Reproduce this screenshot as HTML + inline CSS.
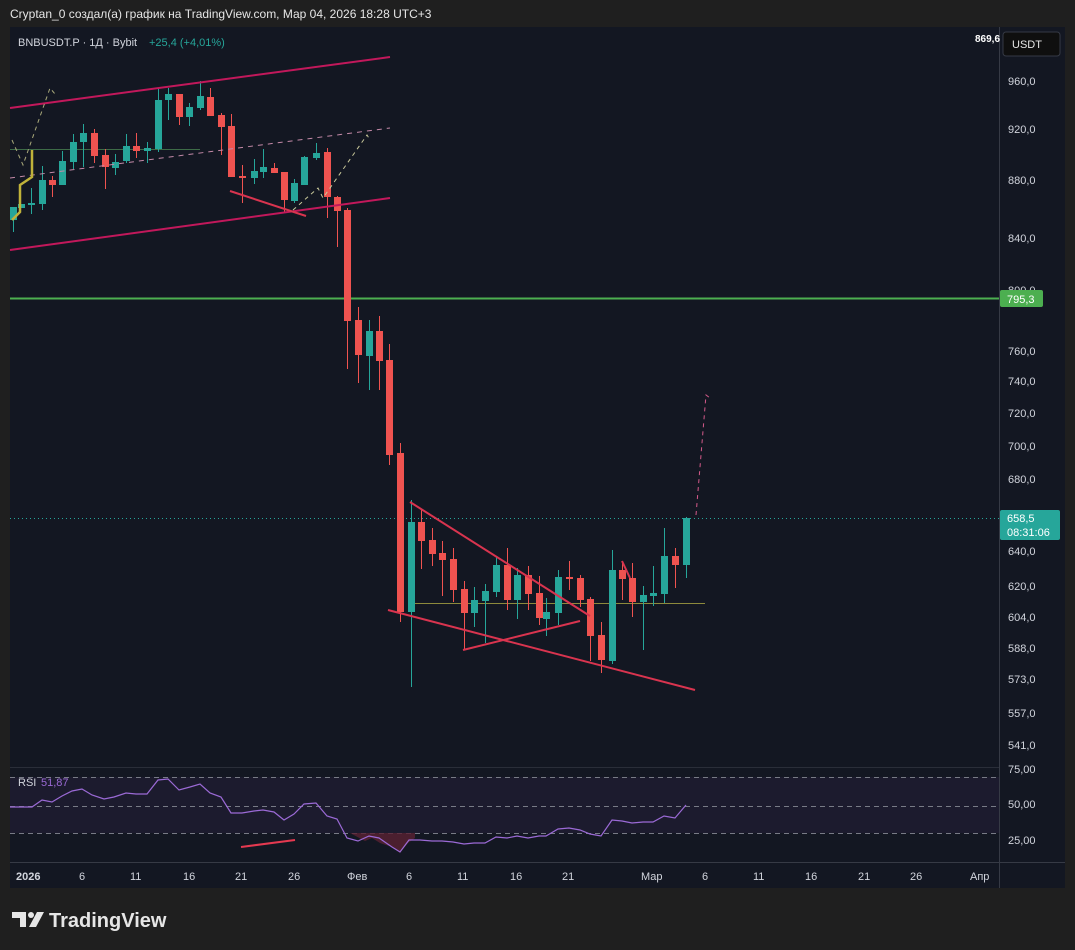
<!DOCTYPE html>
<html><head><meta charset="utf-8"><style>
html,body{margin:0;padding:0;background:#1f1f1f;width:1075px;height:950px;overflow:hidden;font-family:"Liberation Sans",sans-serif}
svg text{font-family:"Liberation Sans",sans-serif}
</style></head><body>
<svg id="s" width="1075" height="950" xmlns="http://www.w3.org/2000/svg">
<rect width="1075" height="950" fill="#1f1f1f"/>
<text x="10" y="18" fill="#e6e6e6" font-size="12">Cryptan_0 создал(а) график на TradingView.com, Мар 04, 2026 18:28 UTC+3</text>
<rect x="10" y="27" width="1055" height="861" fill="#131722"/>
<line x1="999.5" y1="27" x2="999.5" y2="888" stroke="#363a45"/>
<line x1="10" y1="767.5" x2="999" y2="767.5" stroke="#2a2e39"/>
<line x1="10" y1="862.5" x2="1065" y2="862.5" stroke="#363a45"/>
<!-- RSI pane -->
<rect x="10" y="777" width="989" height="56" fill="#1c1b2e"/>
<g stroke="#787b86" stroke-dasharray="5,4" stroke-width="1">
<line x1="10" y1="777.5" x2="999" y2="777.5"/><line x1="10" y1="806.5" x2="999" y2="806.5"/><line x1="10" y1="833.5" x2="999" y2="833.5"/></g>
<polygon points="350,833 365,841 372,838 380,843 392,847 400,853 408,843 415,838 415,833" fill="#5a2233" opacity="0.8"/>
<polyline fill="none" stroke="#9b6ad6" stroke-width="1.2" points="10,807 32,807 42,800 52,802 62,796 72,791 82,789 92,795 104,799 114,797 126,793 136,794 147,794 158,780 168,779 179,790 190,787 200,784 210,793 221,797 231,813 242,813 254,811 263,810 274,812 284,820 294,814 304,804 316,803 327,816 337,819 347,838 358,841 369,836 379,838 392,847 400,852 409,840 420,840 432,841 442,841 453,842 464,844 474,843 485,843 496,837 507,838 517,836 528,838 539,836 546,836 558,829 569,828 580,830 590,834 601,836 612,820 622,821 632,823 643,822 653,822 664,816 675,818 686,805"/>
<line x1="241" y1="847" x2="295" y2="840" stroke="#e53950" stroke-width="2"/>
<text x="18" y="786" fill="#d1d4dc" font-size="11">RSI</text><text x="41" y="786" fill="#9b6ad6" font-size="11">51,87</text>
<!-- axis labels -->
<g fill="#d1d4dc" font-size="11">
<text x="1008" y="85">960,0</text><text x="1008" y="133">920,0</text><text x="1008" y="184">880,0</text><text x="1008" y="242">840,0</text><text x="1008" y="294">800,0</text><text x="1008" y="355">760,0</text><text x="1008" y="385">740,0</text><text x="1008" y="417">720,0</text><text x="1008" y="450">700,0</text><text x="1008" y="483">680,0</text><text x="1008" y="555">640,0</text><text x="1008" y="590">620,0</text><text x="1008" y="621">604,0</text><text x="1008" y="652">588,0</text><text x="1008" y="683">573,0</text><text x="1008" y="717">557,0</text><text x="1008" y="749">541,0</text>
<text x="1008" y="773">75,00</text><text x="1008" y="808">50,00</text><text x="1008" y="844">25,00</text>
<text x="16" y="880" font-weight="bold">2026</text><text x="79" y="880">6</text><text x="130" y="880">11</text><text x="183" y="880">16</text><text x="235" y="880">21</text><text x="288" y="880">26</text><text x="347" y="880">Фев</text><text x="406" y="880">6</text><text x="457" y="880">11</text><text x="510" y="880">16</text><text x="562" y="880">21</text><text x="641" y="880">Мар</text><text x="702" y="880">6</text><text x="753" y="880">11</text><text x="805" y="880">16</text><text x="858" y="880">21</text><text x="910" y="880">26</text><text x="970" y="880">Апр</text>
</g>
<rect x="1003" y="32" width="57" height="24" rx="3" fill="#0f0f0f" stroke="#363a45"/>
<text x="1012" y="48" fill="#e6e6e6" font-size="11">USDT</text>
<text x="975" y="42" fill="#ffffff" font-size="10" font-weight="bold">869,6</text>
<text x="18" y="46" fill="#d1d4dc" font-size="11">BNBUSDT.P · 1Д · Bybit</text>
<text x="149" y="46" fill="#26a69a" font-size="11">+25,4 (+4,01%)</text>
<!-- lines -->
<line x1="10" y1="298.5" x2="999" y2="298.5" stroke="#4caf50" stroke-width="2"/>
<line x1="10" y1="518.5" x2="999" y2="518.5" stroke="#26a69a" stroke-dasharray="1,3"/>
<line x1="410" y1="603.5" x2="705" y2="603.5" stroke="#8d8a3c"/>
<line x1="10" y1="149.5" x2="200" y2="149.5" stroke="#3d6b47"/>
<g id="c"></g>
<g stroke="#c2185b" stroke-width="2" fill="none">
<line x1="10" y1="108" x2="390" y2="57"/><line x1="10" y1="250" x2="390" y2="198"/></g>
<line x1="10" y1="178" x2="390" y2="128" stroke="#c48aa8" stroke-dasharray="5,5"/>
<polyline points="12,220 20,212 20,185 32,177 32,150" fill="none" stroke="#c0b23a" stroke-width="2.5"/>
<polyline points="12,140 23,165 50,88 55,94" fill="none" stroke="#a9a97a" stroke-dasharray="4,4"/>
<polyline points="293,210 318,188 323,198 367,135 370,140" fill="none" stroke="#c8c89a" stroke-dasharray="4,4"/>
<g stroke="#d9344f" stroke-width="2">
<line x1="230" y1="191" x2="306" y2="216"/>
<line x1="410" y1="502" x2="590" y2="616"/><line x1="388" y1="610" x2="695" y2="690"/><line x1="463" y1="650" x2="580" y2="621"/>
<line x1="622" y1="561" x2="630" y2="578"/></g>
<polyline points="696,515 706,395 710,398" fill="none" stroke="#d45a8a" stroke-dasharray="4,4"/>
<rect x="1000" y="290" width="43" height="17" rx="2" fill="#4caf50"/><text x="1007" y="303" fill="#fff" font-size="11">795,3</text>
<rect x="1000" y="510" width="60" height="30" rx="2" fill="#26a69a"/><text x="1007" y="522" fill="#fff" font-size="11">658,5</text><text x="1007" y="536" fill="#fff" font-size="11">08:31:06</text>
<!-- logo -->
<g fill="#e6e6e6"><path d="M12 912h14v15h-6v-9h-8z"/><circle cx="31" cy="915" r="3"/><path d="M37 912h7l-8 15h-7z"/></g>
<text x="49" y="927" fill="#e6e6e6" font-size="20" font-weight="bold">TradingView</text>
</svg>
<script>
var d=[[13,207,220,207,232,1],[21,204,208,204,208,1],[31,203,204,188,214,1],[42,180,204,166,210,1],[52,180,185,176,197,0],[62,161,185,151,185,1],[73,142,162,134,169,1],[83,133,142,124,167,1],[94,133,156,129,163,0],[105,155,167,149,189,0],[115,162,168,154,175,1],[126,146,161,134,163,1],[136,146,151,133,158,0],[147,148,151,142,163,1],[158,100,149,88,152,1],[168,94,100,88,120,1],[179,94,117,94,125,0],[189,107,117,103,126,1],[200,96,108,81,110,1],[210,97,116,88,116,0],[221,115,127,113,155,0],[231,126,177,114,177,0],[242,176,178,165,203,0],[254,171,178,159,184,1],[263,167,172,149,178,1],[274,168,173,163,173,0],[284,172,200,172,213,0],[294,183,201,179,203,1],[304,157,185,156,185,1],[316,153,158,143,160,1],[327,152,197,148,218,0],[337,197,211,196,247,0],[347,210,321,208,369,0],[358,320,355,307,383,0],[369,331,356,320,390,1],[379,331,361,316,390,0],[389,360,455,344,465,0],[400,453,612,443,622,0],[411,522,612,500,687,1],[421,522,541,510,569,0],[432,540,554,528,566,0],[442,553,560,541,596,0],[453,559,590,548,602,0],[464,589,613,581,650,0],[474,600,613,587,627,1],[485,591,601,584,643,1],[496,565,592,557,597,1],[507,565,600,548,610,0],[517,575,600,568,619,1],[528,575,594,566,610,0],[539,593,618,576,625,0],[546,612,619,598,636,1],[558,577,613,570,625,1],[569,577,579,561,590,0],[580,578,600,575,607,0],[590,599,636,597,661,0],[601,635,660,622,673,0],[612,570,661,550,664,1],[622,570,579,561,600,0],[632,578,602,563,617,0],[643,595,602,586,650,1],[653,593,596,566,606,1],[664,556,594,528,603,1],[675,556,565,548,588,0],[686,518,565,517,578,1]];
var h='';d.forEach(function(c){var col=c[5]?'#26a69a':'#ef5350';h+='<line x1="'+(c[0]+.5)+'" y1="'+c[3]+'" x2="'+(c[0]+.5)+'" y2="'+c[4]+'" stroke="'+col+'"/><rect x="'+(c[0]-3)+'" y="'+c[1]+'" width="7" height="'+Math.max(2,c[2]-c[1])+'" fill="'+col+'"/>';});
document.getElementById('c').innerHTML=h;
</script>
</body></html>
